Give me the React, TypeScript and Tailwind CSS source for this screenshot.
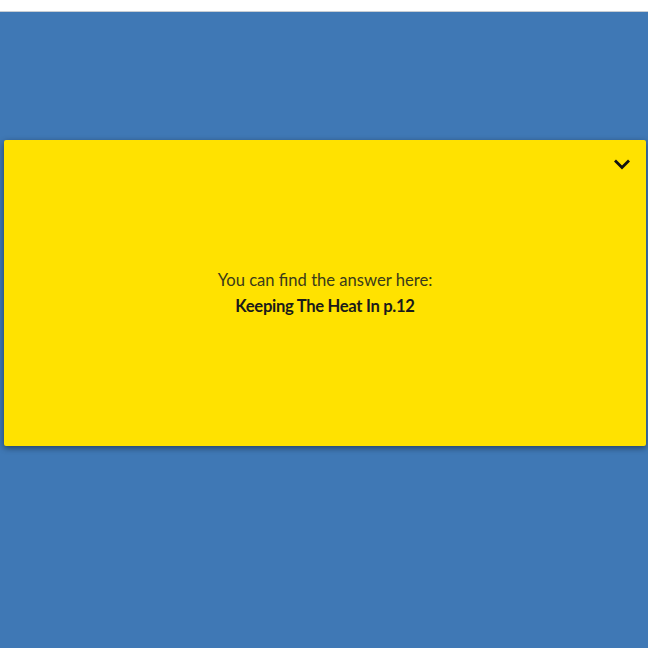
export default function App() {
  return (
    <div className="h-[648px] w-[648px] overflow-hidden bg-white font-['Lato','Open_Sans',sans-serif]">
      <div className="h-[11px] bg-white" />
      <div className="h-px bg-[#c8cdd3]" />
      <div className="flex h-[636px] flex-col bg-[#3f78b5] pl-[4px] pr-[2px] pt-[128px]">
        <div className="relative flex h-[306px] flex-col items-center justify-center rounded-[2px] bg-[#ffe200] shadow-[0_2px_6px_rgba(0,0,0,0.45)]">
          <button className="absolute right-[15px] top-[18px] text-[#111]">
            <svg width="18" height="12" viewBox="0 0 18 12" fill="none">
              <path d="M2 2.5 L9 9.5 L16 2.5" stroke="currentColor" strokeWidth="2.8" />
            </svg>
          </button>
          <p className="text-[16.6px] leading-[26px] text-[#3a3a1a]">You can find the answer here:</p>
          <p className="text-[16.6px] font-bold leading-[26px] tracking-[-0.3px] text-[#1a1a1a]">Keeping The Heat In p.12</p>
        </div>
      </div>
    </div>
  );
}
